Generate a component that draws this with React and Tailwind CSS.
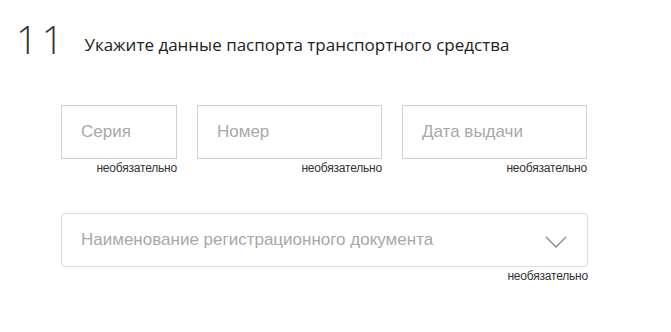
function Field({ label, width }) {
  return (
    <div className={`flex flex-col ${width}`}>
      <div className="h-[54px] border border-[#cfcfcf] flex items-center px-[19px] text-[17px] text-[#a8a8a8]">
        {label}
      </div>
      <span className="self-end mt-[2px] text-[12px] leading-[14px] tracking-[-0.2px] text-[#333]">необязательно</span>
    </div>
  )
}

export default function App() {
  return (
    <div className="w-[671px] h-[332px] bg-white font-['Liberation_Sans',Arial,sans-serif]">
      <div className="flex items-end pt-[19px] pl-[16px]">
        <span className="font-['Open_Sans',sans-serif] font-light text-[38px] leading-[40px] text-[#333] tracking-[4px]">11</span>
        <h1 className="ml-[17px] mb-[4px] font-['Open_Sans',sans-serif] text-[17px] leading-[20px] text-[#222]">
          Укажите данные паспорта транспортного средства
        </h1>
      </div>

      <div className="pl-[61px] w-[588px] pt-[46px]">
        <div className="flex gap-[20px]">
          <Field label="Серия" width="w-[116px]" />
          <Field label="Номер" width="w-[185px]" />
          <Field label="Дата выдачи" width="w-[185px]" />
        </div>

        <div className="mt-[38px] flex flex-col">
          <div className="h-[54px] border border-[#dcdcdc] rounded-[4px] flex items-center justify-between pl-[19px] pr-[20px] text-[17px] text-[#a8a8a8]">
            <span>Наименование регистрационного документа</span>
            <svg width="22" height="12" viewBox="0 0 22 12" fill="none" className="mt-[3px]">
              <polyline points="1,1 11,11 21,1" stroke="#8a8a8a" strokeWidth="1.4" />
            </svg>
          </div>
          <span className="self-end mt-[2px] text-[12px] leading-[14px] tracking-[-0.2px] text-[#333]">необязательно</span>
        </div>
      </div>
    </div>
  )
}
